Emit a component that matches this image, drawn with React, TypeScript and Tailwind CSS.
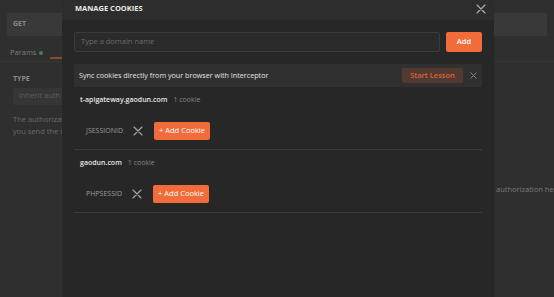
import React from "react";

const cookieGroups = [
  { domain: "t-apigateway.gaodun.com", count: "1 cookie", cookies: ["JSESSIONID"] },
  { domain: "gaodun.com", count: "1 cookie", cookies: ["PHPSESSID"] },
];

function Cross({ size = 9, className = "" }: { size?: number; className?: string }) {
  return (
    <svg width={size} height={size} viewBox="0 0 10 10" className={className}>
      <path d="M1 1L9 9M9 1L1 9" stroke="currentColor" strokeWidth="1.1" strokeLinecap="round" />
    </svg>
  );
}

function BackgroundApp() {
  return (
    <div className="h-full w-full bg-[#2f2f2f] pt-[13px]">
      <div className="mx-[7px] flex h-[23px] items-center rounded-[2px] bg-[#393939] px-[6px]">
        <span className="text-[7px] font-bold text-[#8a8a8a]">GET</span>
      </div>
      <div className="mt-[11px] flex w-[62px] items-center overflow-hidden pl-[10px] text-[7.5px] text-[#7d7d7d]">
        <span>Params</span>
        <span className="ml-[3px] h-[4px] w-[4px] shrink-0 rounded-full bg-[#3d8a4a]" />
        <span className="ml-[7px] h-[12px] w-[12px] shrink-0 border-b-2 border-[#8a4a33]" />
      </div>
      <div className="mt-[2px] h-px bg-[#363636]" />
      <div className="flex">
        <div className="w-[62px] shrink-0 overflow-hidden pl-[13px] pt-[12px] whitespace-nowrap">
          <div className="text-[7px] font-bold text-[#8a8a8a]">TYPE</div>
          <div className="mt-[3px] flex h-[17px] w-[150px] items-center rounded-[2px] bg-[#363636] pl-[6px] text-[7.5px] text-[#5e5e5e]">
            Inherit auth f
          </div>
          <p className="mt-[8px] text-[7.5px] leading-[12px] text-[#6a6a6a]">
            The authorizat
            <br />
            you send the r
          </p>
        </div>
        <div className="flex-1 pt-[122px] pl-[434px] text-[7.5px] whitespace-nowrap text-[#7a7a7a]">
          authorization hel
        </div>
      </div>
    </div>
  );
}

function CookieGroup({ domain, count, cookies }: { domain: string; count: string; cookies: string[] }) {
  return (
    <div className="border-b border-[#3a3a3a] pt-[8px] pb-[9px]">
      <div className="flex h-[10px] items-center pl-[6px]">
        <span className="text-[7px] font-semibold text-[#e6e6e6]">{domain}</span>
        <span className="ml-[6px] text-[7px] text-[#858585]">{count}</span>
      </div>
      {cookies.map((c) => (
        <div key={c} className="mt-[17px] flex items-center pl-[12px]">
          <span className="text-[7px] text-[#9a9a9a]">{c}</span>
          <Cross size={10} className="ml-[10px] text-[#a8a8a8]" />
          <button className="ml-[11px] flex h-[18px] w-[56px] items-center justify-center rounded-[2px] bg-[#f26b3a] text-[7.5px] text-white">
            + Add Cookie
          </button>
        </div>
      ))}
    </div>
  );
}

export default function App() {
  return (
    <div className="relative h-[297px] w-[554px] overflow-hidden" style={{ fontFamily: '"Open Sans", "Noto Sans", sans-serif' }}>
      <BackgroundApp />
      <div className="absolute left-[62px] top-0 flex h-full w-[432px] flex-col bg-[#272727]">
        <div className="flex h-[20px] shrink-0 items-start justify-between bg-[#2d2d2d] pl-[13px] pr-[8px] pt-[3px]">
          <span className="text-[7.5px] font-bold uppercase text-[#e8e8e8]">Manage Cookies</span>
          <Cross size={10} className="mt-[1px] text-[#b0b0b0]" />
        </div>
        <div className="px-[12px] pt-[12px]">
          <div className="flex h-[20px] gap-[6px]">
            <div className="flex flex-1 items-center rounded-[2px] border border-[#3b3b3b] bg-[#2b2b2b] pl-[6px] text-[7.5px] text-[#6a6a6a]">
              Type a domain name
            </div>
            <button className="w-[36px] rounded-[2px] bg-[#f26b3a] text-[7.5px] font-semibold text-white">Add</button>
          </div>
          <div className="mt-[12px] flex h-[23px] items-center bg-[#303030] pl-[5px] pr-[5px]">
            <span className="flex-1 text-[7.2px] text-[#e2e2e2]">Sync cookies directly from your browser with Interceptor</span>
            <button className="h-[15px] w-[61px] rounded-[2px] bg-[#533a30] text-[7.5px] font-semibold text-[#d8653c]">
              Start Lesson
            </button>
            <Cross size={7} className="ml-[7px] text-[#9a9a9a]" />
          </div>
          {cookieGroups.map((g) => (
            <CookieGroup key={g.domain} {...g} />
          ))}
        </div>
      </div>
    </div>
  );
}
